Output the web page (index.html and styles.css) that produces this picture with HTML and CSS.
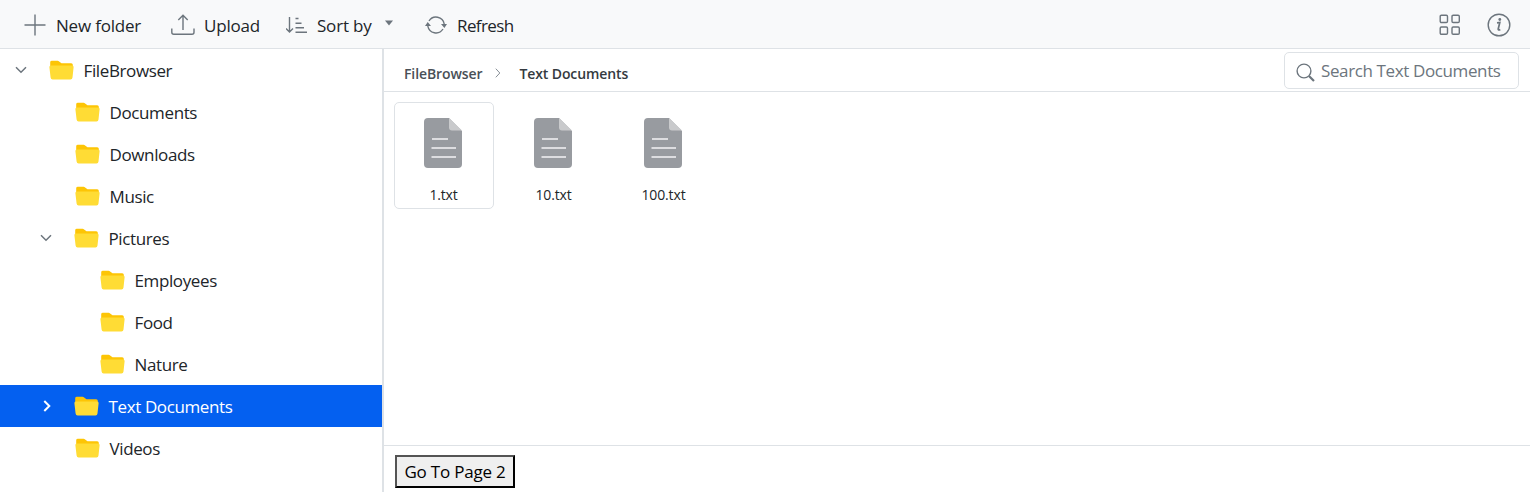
FILE: index.html
```html
<!DOCTYPE html>
<html lang="en">
<head>
<meta charset="utf-8">
<title>File Browser</title>
<link rel="stylesheet" href="styles.css">
</head>
<body>
<svg class="defs" width="0" height="0">
  <symbol id="folder" viewBox="0 0 25 20">
    <path d="M1.2 8V2.2Q1.2.8 2.9.8H8.6q.8 0 1.5.6L12.5 3.2H22.2q1.6 0 1.6 1.5V8Z" fill="#fdc505"/>
    <path d="M1.9 5.6H23.1q1.7 0 1.5 1.7L23.5 17.5Q23.3 19.4 21.5 19.4H3.6Q1.8 19.4 1.6 17.5L.4 7.3Q.2 5.6 1.9 5.6Z" fill="#ffdc35"/>
  </symbol>
  <symbol id="file" viewBox="0 0 38 50">
    <path d="M4 0H25L38 13V46Q38 50 34 50H4Q0 50 0 46V4Q0 0 4 0Z" fill="#989ba0"/>
    <path d="M25 0L38 12.5H28Q25 12.5 25 9.5Z" fill="#c9cacc"/>
    <path d="M8 21H24M7.5 30H32M7.5 39H32" stroke="#f3f4f5" stroke-width="1.6"/>
  </symbol>
  <symbol id="down" viewBox="0 0 12 8"><path d="M1 1.3L6 6.3L11 1.3" fill="none" stroke="currentColor" stroke-width="1.5"/></symbol>
  <symbol id="right" viewBox="0 0 8 12"><path d="M1.3 1L6.3 6L1.3 11" fill="none" stroke="currentColor" stroke-width="2"/></symbol>
</svg>
<header class="toolbar">
  <div class="tool new">
    <svg width="22" height="22" viewBox="0 0 22 22" class="line"><path d="M11 .5V21.5M.5 11H21.5"/></svg>
    <span>New folder</span>
  </div>
  <div class="tool upload">
    <svg width="24" height="22" viewBox="0 0 24 22" class="line"><path d="M.8 14.5V18.2Q.8 20.2 2.8 20.2H21Q23 20.2 23 18.2V14.5M12 16V2M7.3 6L12 1.3L16.7 6"/></svg>
    <span>Upload</span>
  </div>
  <div class="tool sort">
    <svg width="22" height="18" viewBox="0 0 22 18" class="line"><path d="M3.5 1V16M0 12.5L3.5 16L7 12.5M9.5 2.5H12.5M9.5 7.2H15.5M9.5 11.8H18M9.5 16.2H21"/></svg>
    <span>Sort by</span>
    <svg class="caret" width="8" height="6" viewBox="0 0 8 6"><path d="M0 .5H8L4 5.5Z" fill="#6c757d"/></svg>
  </div>
  <div class="tool refresh">
    <svg width="22" height="18" viewBox="0 0 22 18" class="line"><path d="M4 5A8.3 8.3 0 0 1 19.2 8M18 13A8.3 8.3 0 0 1 2.8 10"/><path class="solid" d="M0 10L2.7 6L6 10ZM16 8H22L19.4 12Z"/></svg>
    <span>Refresh</span>
  </div>
  <div class="views">
    <svg width="22" height="22" viewBox="0 0 22 22" class="line"><rect x="1.2" y="1.2" width="7.3" height="7.3" rx="1.2"/><rect x="13" y="1.2" width="7.3" height="7.3" rx="1.2"/><rect x="1.2" y="13" width="7.3" height="7.3" rx="1.2"/><rect x="13" y="13" width="7.3" height="7.3" rx="1.2"/></svg>
    <svg width="24" height="24" viewBox="0 0 24 24" class="line"><circle cx="12" cy="12" r="10.8"/><path d="M10 9.9L12.8 9.5L11.2 16Q10.9 17.5 13.3 16.6" stroke-width="1.7"/><circle class="solid" cx="12.8" cy="6.5" r="1.4"/></svg>
  </div>
</header>
<div class="body">
  <nav class="tree">
    <div class="node l0"><svg class="chev"><use href="#down"/></svg><svg class="folder"><use href="#folder"/></svg><span>FileBrowser</span></div>
    <div class="node leaf1"><svg class="folder"><use href="#folder"/></svg><span>Documents</span></div>
    <div class="node leaf1"><svg class="folder"><use href="#folder"/></svg><span>Downloads</span></div>
    <div class="node leaf1"><svg class="folder"><use href="#folder"/></svg><span>Music</span></div>
    <div class="node l1"><svg class="chev"><use href="#down"/></svg><svg class="folder"><use href="#folder"/></svg><span>Pictures</span></div>
    <div class="node leaf2"><svg class="folder"><use href="#folder"/></svg><span>Employees</span></div>
    <div class="node leaf2"><svg class="folder"><use href="#folder"/></svg><span>Food</span></div>
    <div class="node leaf2"><svg class="folder"><use href="#folder"/></svg><span>Nature</span></div>
    <div class="node l1 selected"><svg class="chev side"><use href="#right"/></svg><svg class="folder"><use href="#folder"/></svg><span>Text Documents</span></div>
    <div class="node leaf1"><svg class="folder"><use href="#folder"/></svg><span>Videos</span></div>
  </nav>
  <main class="content">
    <div class="address">
      <span class="crumb">FileBrowser</span>
      <svg class="sep" width="6" height="10" viewBox="0 0 6 10"><path d="M.8.7L4.8 5L.8 9.3" fill="none" stroke="#868e96"/></svg>
      <span class="crumb current">Text Documents</span>
      <div class="search">
        <svg width="19" height="19" viewBox="0 0 19 19" class="line"><circle cx="8" cy="8" r="6.9"/><path d="M13 13L18 18" stroke-width="2.2"/></svg>
        <span>Search Text Documents</span>
      </div>
    </div>
    <div class="files">
      <div class="file focused"><svg><use href="#file"/></svg><span>1.txt</span></div>
      <div class="file"><svg><use href="#file"/></svg><span>10.txt</span></div>
      <div class="file"><svg><use href="#file"/></svg><span>100.txt</span></div>
    </div>
    <footer class="pager"><button class="page">Go To Page 2</button></footer>
  </main>
</div>
</body>
</html>
```
FILE: styles.css
```css
* { box-sizing: border-box; }
body {
  margin: 0;
  height: 492px;
  overflow: hidden;
  display: flex;
  flex-direction: column;
  background: #fff;
  color: #212529;
  font: 17px/24px "Open Sans", "Noto Sans", sans-serif;
  letter-spacing: -0.38px;
  white-space: nowrap;
}
svg { display: block; flex: none; }
.defs { position: absolute; }
.line { fill: none; stroke: #6c757d; stroke-width: 1.4; }
.solid { fill: #6c757d; stroke: none; }

.toolbar {
  height: 49px;
  flex: none;
  display: flex;
  align-items: center;
  padding: 0 19px 0 24px;
  background: #f8f9fa;
  border-bottom: 1px solid #dee2e6;
}
.tool { display: flex; align-items: center; height: 48px; padding-top: 3px; letter-spacing: -0.2px; }
.tool > svg { margin-top: -2px; }
.new { width: 147px; gap: 10px; }
.upload { width: 115px; gap: 9px; }
.sort { width: 139px; gap: 9px; }
.sort .caret { margin: -6px 0 0 4px; }
.refresh { gap: 10px; letter-spacing: -0.6px; }
.views { margin-left: auto; display: flex; align-items: center; gap: 26px; padding-top: 1px; }

.body { flex: 1; display: flex; min-height: 0; }
.tree { width: 384px; flex: none; border-right: 2px solid #dee2e6; }
.node { height: 42px; display: flex; align-items: center; }
.node span { padding-top: 2px; }
.folder { width: 25px; height: 20px; margin-right: 10px; }
.chev { width: 12px; height: 8px; margin-right: 22px; color: #6c757d; }
.side { width: 8px; height: 12px; margin: 0 23px 0 3px; }
.l0 { padding-left: 14.5px; }
.l1 { padding-left: 39.5px; }
.leaf1 { padding-left: 75px; }
.leaf1 .folder, .leaf2 .folder { margin-right: 9.5px; }
.leaf2 { padding-left: 100px; }
.selected { background: #0460f0; color: #fff; }
.selected .chev { color: #fff; }

.content { flex: 1; display: flex; flex-direction: column; min-width: 0; }
.address {
  height: 43px;
  display: flex;
  align-items: center;
  padding: 0 11px 0 20px;
  border-bottom: 1px solid #dee2e6;
}
.crumb { padding-top: 7px; font-size: 14px; font-weight: 600; letter-spacing: -0.1px; color: #495057; }
.current { color: #343a40; }
.sep { margin: 6px 18px 0 13px; }
.search {
  width: 235px;
  height: 37px;
  margin-left: auto;
  display: flex;
  align-items: center;
  gap: 6px;
  padding-left: 11px;
  border: 1px solid #dee2e6;
  border-radius: 5px;
  color: #6c757d;
}
.search svg { margin-top: 5px; }
.search span { padding-top: 2px; }
.files { flex: 1; display: flex; gap: 10px; padding: 10px; }
.file {
  width: 100px;
  height: 107px;
  display: flex;
  flex-direction: column;
  align-items: center;
  gap: 15px;
  padding-top: 15px;
  border: 1px solid transparent;
  border-radius: 5px;
  font-size: 14px;
  letter-spacing: -0.15px;
}
.file svg { width: 38px; height: 50px; margin-left: -2px; }
.file span { margin-left: -1px; }
.focused { border-color: #dee2e6; }
.pager { height: 47px; border-top: 1px solid #dee2e6; padding: 9px 11px; }
.page {
  width: 120px;
  height: 33px;
  padding: 0;
  border: 2px outset #000;
  background: #efefef;
  color: #000;
  font: inherit;
  letter-spacing: -0.2px;
}
```
